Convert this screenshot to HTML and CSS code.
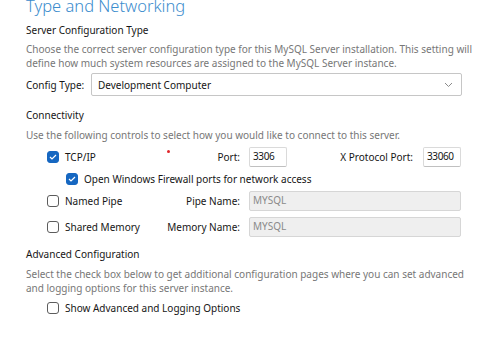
FILE: index.html
```html
<!DOCTYPE html>
<html>
<head>
<meta charset="utf-8">
<link rel="stylesheet" href="styles.css">
</head>
<body>
<div class="page">
  <h1 class="title">Type and Networking</h1>

  <h2 class="section s1">Server Configuration Type</h2>
  <p class="desc d1">Choose the correct server configuration type for this MySQL Server installation. This setting will define how much system resources are assigned to the MySQL Server instance.</p>

  <div class="config-row">
    <span class="label config-label">Config Type:</span>
    <div class="select">
      <span>Development Computer</span>
      <svg class="chev" width="9" height="6" viewBox="0 0 9 6"><path d="M1 1 L4.5 4.5 L8 1" fill="none" stroke="#8a8a8a" stroke-width="1"/></svg>
    </div>
  </div>

  <h2 class="section s2">Connectivity</h2>
  <p class="desc d2">Use the following controls to select how you would like to connect to this server.</p>

  <div class="conn">
    <div class="row">
      <div class="opt"><span class="cb checked"><svg width="8" height="6" viewBox="0 0 8 6"><path d="M1 3 L3 5 L7 1" fill="none" stroke="#fff" stroke-width="1.2"/></svg></span><span>TCP/IP</span></div>
      <div class="lbl with-dot"><span class="dot"></span><span>Port:</span></div>
      <div class="input small">3306</div>
      <div class="lbl grow">X Protocol Port:</div>
      <div class="input small last">33060</div>
    </div>
    <div class="row sub">
      <div class="opt"><span class="cb checked"><svg width="8" height="6" viewBox="0 0 8 6"><path d="M1 3 L3 5 L7 1" fill="none" stroke="#fff" stroke-width="1.2"/></svg></span><span>Open Windows Firewall ports for network access</span></div>
    </div>
    <div class="row">
      <div class="opt"><span class="cb"></span><span>Named Pipe</span></div>
      <div class="lbl">Pipe Name:</div>
      <div class="input wide disabled">MYSQL</div>
    </div>
    <div class="row r4">
      <div class="opt"><span class="cb"></span><span>Shared Memory</span></div>
      <div class="lbl">Memory Name:</div>
      <div class="input wide disabled">MYSQL</div>
    </div>
  </div>

  <h2 class="section s3">Advanced Configuration</h2>
  <p class="desc d3">Select the check box below to get additional configuration pages where you can set advanced and logging options for this server instance.</p>

  <div class="row adv">
    <div class="opt"><span class="cb"></span><span>Show Advanced and Logging Options</span></div>
  </div>
</div>
</body>
</html>
```

FILE: styles.css
```css
* { box-sizing: border-box; }
html, body { margin: 0; padding: 0; background: #fff; }
body {
  font-family: "Noto Sans", "Open Sans", sans-serif;
  font-size: 10px;
  color: #161616;
  overflow: hidden;
  width: 482px;
  height: 337px;
}
.page { padding-left: 26px; width: 482px; }
.title {
  margin: -6px 0 0 0;
  font-size: 16.5px;
  line-height: 24px;
  font-weight: 300;
  color: #3b8ccd;
}
.section {
  margin: 0;
  font-size: 10px;
  line-height: 14px;
  font-weight: 400;
  color: #161616;
}
.s1 { margin-top: 5px; }
.s2 { margin-top: 12px; }
.s3 { margin-top: 10px; }
.desc {
  margin: 0;
  line-height: 14px;
  color: #777;
  width: 446px;
}
.d1 { margin-top: 5px; }
.d2 { margin-top: 6px; }
.d3 { margin-top: 6px; }
.config-row {
  display: flex;
  align-items: center;
  margin-top: 3px;
  height: 23px;
}
.config-label { width: 65px; }
.select {
  width: 371px;
  height: 23px;
  border: 1px solid #c6c6c6;
  border-radius: 2px;
  display: flex;
  align-items: center;
  justify-content: space-between;
  padding: 0 8px 0 6px;
}
.conn { margin-top: 5px; padding-left: 21px; }
.row {
  display: flex;
  align-items: center;
  height: 20px;
  margin-top: 2px;
}
.conn .row:first-child { margin-top: 0; }
.row.r4 { margin-top: 6px; }
.row.sub { padding-left: 19px; }
.opt { display: flex; align-items: center; width: 120px; white-space: nowrap; }
.cb {
  width: 12px;
  height: 12px;
  border: 1px solid #5c5c5c;
  border-radius: 3px;
  background: #fff;
  margin-right: 6px;
  display: inline-flex;
  align-items: center;
  justify-content: center;
  flex: none;
}
.cb.checked { background: #1667c1; border-color: #1667c1; }
.lbl { width: 73px; text-align: right; white-space: nowrap; }
.with-dot { display: flex; justify-content: space-between; align-items: flex-start; height: 14px; }
.dot { width: 3px; height: 3px; border-radius: 50%; background: #e0262a; margin-top: 0; }
.lbl.grow { width: 126px; }
.input {
  margin-left: 9px;
  height: 20px;
  border: 1px solid #dadada;
  border-bottom-color: #c0c0c0;
  border-radius: 2px;
  padding: 0 3px;
  line-height: 17px;
  background: #fff;
  overflow: hidden;
  white-space: nowrap;
}
.input.small { width: 38px; letter-spacing: -0.4px; }
.input.last { margin-left: 10px; }
.input.wide { width: 212px; }
.input.disabled { background: #efefef; color: #8a8a8a; border-color: #d6d6d6; }
.row.adv { margin-top: 3px; padding-left: 21px; }
.row.adv .opt { width: auto; }
```
